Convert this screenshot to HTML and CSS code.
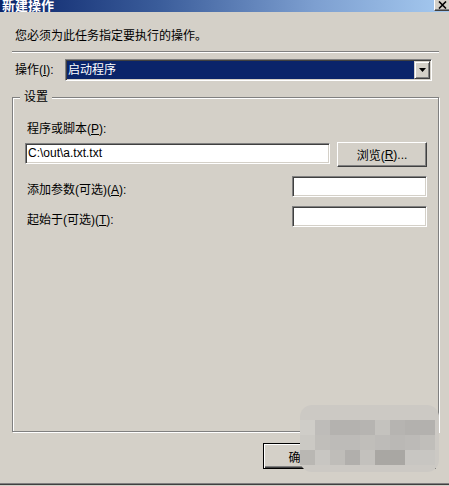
FILE: index.html
```html
<!DOCTYPE html>
<html lang="zh-CN">
<head>
<meta charset="utf-8">
<title>新建操作</title>
<link rel="stylesheet" href="styles.css">
</head>
<body>
<div class="window">
  <div class="titlebar">
    <span class="title">新建操作</span>
    <span class="close"><svg width="9" height="8" viewBox="0 0 9 8"><path d="M1 0.5 L8 7.5 M8 0.5 L1 7.5" stroke="#000" stroke-width="1.6"/></svg></span>
  </div>
  <p class="intro">您必须为此任务指定要执行的操作。</p>
  <div class="sep"></div>
  <div class="action-row">
    <span class="label action-label">操作(<u>I</u>):</span>
    <div class="combo">
      <span class="combo-value">启动程序</span>
      <span class="combo-btn"><svg width="7" height="4" viewBox="0 0 7 4"><path d="M0 0 H7 L3.5 4 Z" fill="#000"/></svg></span>
    </div>
  </div>
  <fieldset class="group">
    <legend>设置</legend>
    <div class="field-label">程序或脚本(<u>P</u>):</div>
    <div class="path-row">
      <div class="input wide">C:\out\a.txt.txt</div>
      <div class="btn browse">浏览(<u>R</u>)...</div>
    </div>
    <div class="opt-row">
      <span class="label">添加参数(可选)(<u>A</u>):</span>
      <div class="input short"></div>
    </div>
    <div class="opt-row second">
      <span class="label">起始于(可选)(<u>T</u>):</span>
      <div class="input short"></div>
    </div>
  </fieldset>
  <div class="buttons">
    <div class="btn default">确定</div>
    <div class="btn cancel">取消</div>
  </div>
  <div class="mosaic">
    <div class="cells">
      <i style="background:#cfcdc8"></i><i style="background:#bebcb9"></i><i style="background:#b4b2af"></i><i style="background:#b4b2af"></i><i style="background:#b6b4b1"></i><i style="background:#c4c2be"></i><i style="background:#b6b4b1"></i><i style="background:#b3b1ae"></i><i style="background:#b3b1ae"></i>
      <i style="background:#cbc9c4"></i><i style="background:#c0beba"></i><i style="background:#bdbbb8"></i><i style="background:#bdbbb8"></i><i style="background:#c0beba"></i><i style="background:#bdbbb8"></i><i style="background:#bab8b5"></i><i style="background:#bcbab7"></i><i style="background:#c0beba"></i>
      <i style="background:#b9b7b3"></i><i style="background:#c8c6c2"></i><i style="background:#bfbdb9"></i><i style="background:#b1afac"></i><i style="background:#c3c1bd"></i><i style="background:#a9a7a3"></i><i style="background:#a9a7a3"></i><i style="background:#c8c6c2"></i><i style="background:#c8c6c2"></i>
    </div>
  </div>
</div>
</body>
</html>
```
FILE: styles.css
```css
* { box-sizing: border-box; }
html, body { margin: 0; padding: 0; background: #d4d0c8; }
body {
  width: 449px;
  height: 486px;
  overflow: hidden;
  font-family: "Liberation Sans", "Noto Sans CJK SC", sans-serif;
  font-size: 12px;
  color: #000;
}
.window {
  position: relative;
  width: 449px;
  height: 484px;
  background: #d4d0c8;
  border-bottom: 1px solid #808080;
  box-shadow: 0 1px 0 #404040;
  overflow: hidden;
}
.titlebar {
  height: 12px;
  display: flex;
  justify-content: space-between;
  align-items: flex-start;
  background: linear-gradient(to right, #0a246a 0%, #3a5c9a 35%, #7d9fd0 70%, #a6caf0 100%);
  overflow: hidden;
}
.title {
  padding-left: 2px;
  font-family: "Noto Sans CJK SC", sans-serif;
  font-weight: bold;
  font-size: 13px;
  line-height: 9px;
  color: #fff;
}
.close {
  width: 15px;
  height: 11px;
  display: flex;
  align-items: center;
  justify-content: center;
  background: #d4d0c8;
  border-left: 1px solid #fff;
  border-bottom: 1px solid #404040;
  box-shadow: inset 0 -1px 0 #808080;
}
.intro {
  margin: 15px 0 0 15px;
  line-height: 16px;
  font-family: "Noto Sans CJK SC", sans-serif;
}
.sep {
  margin: 8px 10px 0 12px;
  height: 2px;
  border-top: 1px solid #808080;
  border-bottom: 1px solid #fff;
}
.action-row {
  margin: 6px 0 0 15px;
  display: flex;
  align-items: center;
}
.label { line-height: 16px; }
.action-label { width: 50px; }
.combo {
  width: 367px;
  height: 22px;
  display: flex;
  border: 1px solid;
  border-color: #808080 #fff #fff #808080;
  box-shadow: inset 1px 1px 0 #404040, inset -1px -1px 0 #d4d0c8;
  padding: 1px;
  background: #fff;
}
.combo-value {
  flex: 1;
  background: #0a246a;
  color: #fff;
  line-height: 18px;
  padding-left: 1px;
}
.combo-btn {
  width: 16px;
  display: flex;
  align-items: center;
  justify-content: center;
  background: #d4d0c8;
  border: 1px solid;
  border-color: #d4d0c8 #404040 #404040 #d4d0c8;
  box-shadow: inset 1px 1px 0 #fff, inset -1px -1px 0 #808080;
}
.group {
  margin: 8px 0 0 12px;
  width: 427px;
  height: 343px;
  padding: 16px 11px 0 12px;
  border: 1px solid #808080;
  box-shadow: inset 1px 1px 0 #fff, 1px 1px 0 #fff;
  min-width: 0;
}
.group legend {
  margin-left: -5px;
  padding: 0 4px;
  line-height: 16px;
  background: #d4d0c8;
}
.field-label {
  margin-left: 2px;
  line-height: 16px;
}
.path-row {
  margin-top: 5px;
  display: flex;
  align-items: flex-start;
  justify-content: space-between;
}
.input {
  height: 21px;
  border: 1px solid;
  border-color: #808080 #fff #fff #808080;
  box-shadow: inset 1px 1px 0 #404040, inset -1px -1px 0 #d4d0c8;
  background: #fff;
  padding: 0 2px;
  line-height: 19px;
}
.input.wide { width: 305px; margin-top: 1px; }
.input.short { width: 135px; }
.btn {
  display: flex;
  align-items: center;
  justify-content: center;
  background: #d4d0c8;
  border: 1px solid;
  border-color: #fff #404040 #404040 #fff;
  box-shadow: inset -1px -1px 0 #808080;
}
.browse { width: 90px; height: 25px; }
.opt-row {
  margin-top: 9px;
  display: flex;
  align-items: flex-start;
  justify-content: space-between;
}
.opt-row.second { margin-top: 8px; }
.opt-row .label { margin: 6px 0 0 2px; }
.buttons {
  margin: 11px 0 0 263px;
  display: flex;
  gap: 8px;
}
.buttons .btn { height: 26px; }
.default {
  width: 75px;
  border: 1px solid #000;
  box-shadow: inset 1px 1px 0 #fff, inset -1px -1px 0 #404040, inset -2px -2px 0 #808080;
}
.cancel { width: 90px; }
.mosaic {
  position: absolute;
  left: 300px;
  top: 405px;
  width: 139px;
  height: 67px;
  padding-top: 15px;
  border-radius: 12px;
  background: #ccc9c4;
}
.cells {
  display: grid;
  grid-template-columns: repeat(9, 15px);
  grid-auto-rows: 15px;
}
.cells i { display: block; }
```
